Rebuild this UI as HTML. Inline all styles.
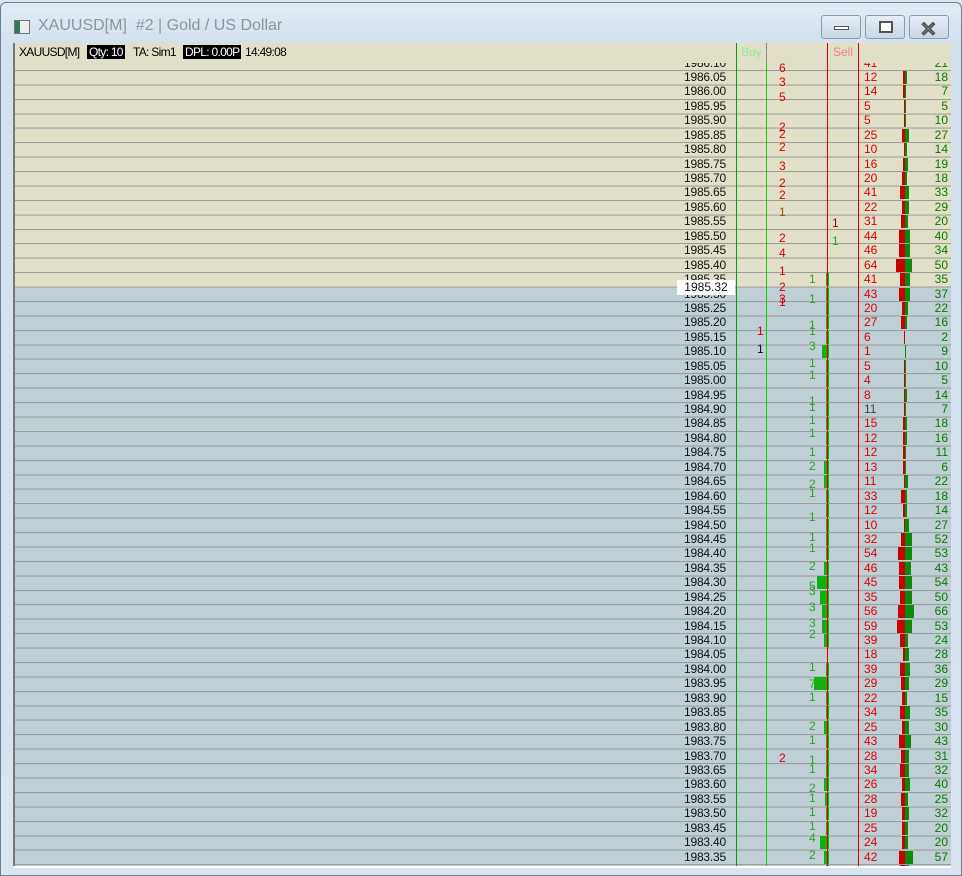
<!DOCTYPE html>
<html><head><meta charset="utf-8"><style>
*{margin:0;padding:0;box-sizing:border-box}
body{width:962px;height:876px;overflow:hidden;background:#d9e5f1;font-family:"Liberation Sans",sans-serif;font-size:12px;position:relative}
#frame{position:absolute;left:0;top:2px;width:962px;height:874px;background:linear-gradient(#e4ecf5,#d3e0ee 40px,#d8e4f0);border:1px solid #6d7f93;border-radius:6px 6px 0 0}
#title{position:absolute;left:38px;top:17px;font-size:16px;color:#8c969f}
#ico{position:absolute;left:14px;top:20px;width:16px;height:14px;border:1px solid #777;background:linear-gradient(90deg,#2b7a5a 0 5px,#eee 5px)}
.btn{position:absolute;top:15px;width:40px;height:24px;border:1px solid #8a9bb0;border-radius:3px;background:linear-gradient(#e8eef6,#c9d6e6)}
#area{position:absolute;left:13px;top:43px;width:938px;height:823px;overflow:hidden;background:#bfcfd6;border-left:2px solid #777}
#tan{position:absolute;left:0;top:0;width:100%;height:244px;background:#e2dfc8}
#lines{position:absolute;left:0;top:0;width:100%;height:100%;background:repeating-linear-gradient(to bottom,transparent 0,transparent 13.44px,#999 13.44px,#999 14.44px);background-position:0 13.56px}
#rows{position:absolute;left:0;top:12.56px;width:938px}
.r{position:relative;height:14.44px}
.r span{position:absolute;top:0;line-height:14px}
.p{left:0;width:711px;text-align:right;color:#111;letter-spacing:-0.2px}
.a{left:849px;color:#d00}
.g{left:880px;width:53px;text-align:right;color:#0a7a00}
.br{position:absolute;top:1px;height:13px;right:48px;background:#c80000}
.bg{position:absolute;top:1px;height:13px;left:890px;background:#0a8a0a}
.gb{position:absolute;top:1px;height:13px;right:124px;background:#10b010}
.v{position:absolute;top:0;width:1px;height:100%}
.n{position:absolute;line-height:14px}
.nr{color:#d00}.ng{color:#2aa52a}
#hdr{position:absolute;left:0;top:0;width:100%;height:20px;background:#e2dfc8}
#hdr span{position:absolute;top:2px;letter-spacing:-0.7px;white-space:nowrap}
.bk{background:#000;color:#fff;padding:0 2px}
</style></head><body>
<div id="frame"></div>
<div id="ico"></div>
<div id="title">XAUUSD[M]&nbsp; #2 | Gold / US Dollar</div>
<div class="btn" style="left:821px"><div style="position:absolute;left:12px;top:10px;width:15px;height:4px;background:#fff;border:1px solid #555"></div></div>
<div class="btn" style="left:865px"><div style="position:absolute;left:13px;top:5px;width:14px;height:12px;background:#fff;border:2px solid #555"></div></div>
<div class="btn" style="left:909px"><div style="position:absolute;left:10px;top:1px;font-size:20px;font-weight:bold;color:#fff;-webkit-text-stroke:1px #555">✕</div></div>
<div id="area">
<div id="tan"></div>
<div id="lines"></div>
<div id="rows">
<div class="r"><span class="p">1986.10</span><span class="a">41</span><span class="g">21</span></div>
<div class="r"><span class="p">1986.05</span><span class="a">12</span><span class="g">18</span><i class="br" style="width:2px"></i><i class="bg" style="width:2px"></i></div>
<div class="r"><span class="p">1986.00</span><span class="a">14</span><span class="g">7</span><i class="br" style="width:2px"></i><i class="bg" style="width:1px"></i></div>
<div class="r"><span class="p">1985.95</span><span class="a">5</span><span class="g">5</span><i class="br" style="width:1px"></i><i class="bg" style="width:1px"></i></div>
<div class="r"><span class="p">1985.90</span><span class="a">5</span><span class="g">10</span><i class="br" style="width:1px"></i><i class="bg" style="width:1px"></i></div>
<div class="r"><span class="p">1985.85</span><span class="a">25</span><span class="g">27</span><i class="br" style="width:3px"></i><i class="bg" style="width:4px"></i></div>
<div class="r"><span class="p">1985.80</span><span class="a">10</span><span class="g">14</span><i class="br" style="width:1px"></i><i class="bg" style="width:2px"></i></div>
<div class="r"><span class="p">1985.75</span><span class="a">16</span><span class="g">19</span><i class="br" style="width:2px"></i><i class="bg" style="width:3px"></i></div>
<div class="r"><span class="p">1985.70</span><span class="a">20</span><span class="g">18</span><i class="br" style="width:3px"></i><i class="bg" style="width:2px"></i></div>
<div class="r"><span class="p">1985.65</span><span class="a">41</span><span class="g">33</span><i class="br" style="width:5px"></i><i class="bg" style="width:4px"></i></div>
<div class="r"><span class="p">1985.60</span><span class="a">22</span><span class="g">29</span><i class="br" style="width:3px"></i><i class="bg" style="width:4px"></i></div>
<div class="r"><span class="p">1985.55</span><span class="a">31</span><span class="g">20</span><i class="br" style="width:4px"></i><i class="bg" style="width:3px"></i></div>
<div class="r"><span class="p">1985.50</span><span class="a">44</span><span class="g">40</span><i class="br" style="width:6px"></i><i class="bg" style="width:5px"></i></div>
<div class="r"><span class="p">1985.45</span><span class="a">46</span><span class="g">34</span><i class="br" style="width:6px"></i><i class="bg" style="width:5px"></i></div>
<div class="r"><span class="p">1985.40</span><span class="a">64</span><span class="g">50</span><i class="br" style="width:9px"></i><i class="bg" style="width:7px"></i></div>
<div class="r"><span class="p">1985.35</span><span class="a">41</span><span class="g">35</span><i class="br" style="width:5px"></i><i class="bg" style="width:5px"></i><i class="gb" style="width:3px"></i></div>
<div class="r"><span class="p">1985.30</span><span class="a">43</span><span class="g">37</span><i class="br" style="width:6px"></i><i class="bg" style="width:5px"></i><i class="gb" style="width:3px"></i></div>
<div class="r"><span class="p">1985.25</span><span class="a">20</span><span class="g">22</span><i class="br" style="width:3px"></i><i class="bg" style="width:3px"></i><i class="gb" style="width:3px"></i></div>
<div class="r"><span class="p">1985.20</span><span class="a">27</span><span class="g">16</span><i class="br" style="width:4px"></i><i class="bg" style="width:2px"></i><i class="gb" style="width:3px"></i></div>
<div class="r"><span class="p">1985.15</span><span class="a">6</span><span class="g">2</span><i class="br" style="width:1px"></i><i class="gb" style="width:3px"></i></div>
<div class="r"><span class="p">1985.10</span><span class="a">1</span><span class="g">9</span><i class="bg" style="width:1px"></i><i class="gb" style="width:7px"></i></div>
<div class="r"><span class="p">1985.05</span><span class="a">5</span><span class="g">10</span><i class="br" style="width:1px"></i><i class="bg" style="width:1px"></i><i class="gb" style="width:3px"></i></div>
<div class="r"><span class="p">1985.00</span><span class="a">4</span><span class="g">5</span><i class="br" style="width:1px"></i><i class="bg" style="width:1px"></i><i class="gb" style="width:3px"></i></div>
<div class="r"><span class="p">1984.95</span><span class="a">8</span><span class="g">14</span><i class="br" style="width:1px"></i><i class="bg" style="width:2px"></i><i class="gb" style="width:3px"></i></div>
<div class="r"><span class="p">1984.90</span><span class="a" style="color:#444">11</span><span class="g">7</span><i class="br" style="width:1px"></i><i class="bg" style="width:1px"></i><i class="gb" style="width:3px"></i></div>
<div class="r"><span class="p">1984.85</span><span class="a">15</span><span class="g">18</span><i class="br" style="width:2px"></i><i class="bg" style="width:2px"></i><i class="gb" style="width:3px"></i></div>
<div class="r"><span class="p">1984.80</span><span class="a">12</span><span class="g">16</span><i class="br" style="width:2px"></i><i class="bg" style="width:2px"></i><i class="gb" style="width:3px"></i></div>
<div class="r"><span class="p">1984.75</span><span class="a">12</span><span class="g">11</span><i class="br" style="width:2px"></i><i class="bg" style="width:1px"></i><i class="gb" style="width:3px"></i></div>
<div class="r"><span class="p">1984.70</span><span class="a">13</span><span class="g">6</span><i class="br" style="width:2px"></i><i class="bg" style="width:1px"></i><i class="gb" style="width:5px"></i></div>
<div class="r"><span class="p">1984.65</span><span class="a">11</span><span class="g">22</span><i class="br" style="width:1px"></i><i class="bg" style="width:3px"></i><i class="gb" style="width:5px"></i></div>
<div class="r"><span class="p">1984.60</span><span class="a">33</span><span class="g">18</span><i class="br" style="width:4px"></i><i class="bg" style="width:2px"></i><i class="gb" style="width:3px"></i></div>
<div class="r"><span class="p">1984.55</span><span class="a">12</span><span class="g">14</span><i class="br" style="width:2px"></i><i class="bg" style="width:2px"></i><i class="gb" style="width:3px"></i></div>
<div class="r"><span class="p">1984.50</span><span class="a">10</span><span class="g">27</span><i class="br" style="width:1px"></i><i class="bg" style="width:4px"></i><i class="gb" style="width:3px"></i></div>
<div class="r"><span class="p">1984.45</span><span class="a">32</span><span class="g">52</span><i class="br" style="width:4px"></i><i class="bg" style="width:7px"></i><i class="gb" style="width:3px"></i></div>
<div class="r"><span class="p">1984.40</span><span class="a">54</span><span class="g">53</span><i class="br" style="width:7px"></i><i class="bg" style="width:7px"></i><i class="gb" style="width:3px"></i></div>
<div class="r"><span class="p">1984.35</span><span class="a">46</span><span class="g">43</span><i class="br" style="width:6px"></i><i class="bg" style="width:6px"></i><i class="gb" style="width:5px"></i></div>
<div class="r"><span class="p">1984.30</span><span class="a">45</span><span class="g">54</span><i class="br" style="width:6px"></i><i class="bg" style="width:7px"></i><i class="gb" style="width:12px"></i></div>
<div class="r"><span class="p">1984.25</span><span class="a">35</span><span class="g">50</span><i class="br" style="width:5px"></i><i class="bg" style="width:7px"></i><i class="gb" style="width:9px"></i></div>
<div class="r"><span class="p">1984.20</span><span class="a">56</span><span class="g">66</span><i class="br" style="width:7px"></i><i class="bg" style="width:9px"></i><i class="gb" style="width:7px"></i></div>
<div class="r"><span class="p">1984.15</span><span class="a">59</span><span class="g">53</span><i class="br" style="width:8px"></i><i class="bg" style="width:7px"></i><i class="gb" style="width:7px"></i></div>
<div class="r"><span class="p">1984.10</span><span class="a">39</span><span class="g">24</span><i class="br" style="width:5px"></i><i class="bg" style="width:3px"></i><i class="gb" style="width:5px"></i></div>
<div class="r"><span class="p">1984.05</span><span class="a">18</span><span class="g">28</span><i class="br" style="width:2px"></i><i class="bg" style="width:4px"></i></div>
<div class="r"><span class="p">1984.00</span><span class="a">39</span><span class="g">36</span><i class="br" style="width:5px"></i><i class="bg" style="width:5px"></i><i class="gb" style="width:3px"></i></div>
<div class="r"><span class="p">1983.95</span><span class="a">29</span><span class="g">29</span><i class="br" style="width:4px"></i><i class="bg" style="width:4px"></i><i class="gb" style="width:15px"></i></div>
<div class="r"><span class="p">1983.90</span><span class="a">22</span><span class="g">15</span><i class="br" style="width:3px"></i><i class="bg" style="width:2px"></i><i class="gb" style="width:3px"></i></div>
<div class="r"><span class="p">1983.85</span><span class="a">34</span><span class="g">35</span><i class="br" style="width:5px"></i><i class="bg" style="width:5px"></i><i class="gb" style="width:3px"></i></div>
<div class="r"><span class="p">1983.80</span><span class="a">25</span><span class="g">30</span><i class="br" style="width:3px"></i><i class="bg" style="width:4px"></i><i class="gb" style="width:5px"></i></div>
<div class="r"><span class="p">1983.75</span><span class="a">43</span><span class="g">43</span><i class="br" style="width:6px"></i><i class="bg" style="width:6px"></i><i class="gb" style="width:3px"></i></div>
<div class="r"><span class="p">1983.70</span><span class="a">28</span><span class="g">31</span><i class="br" style="width:4px"></i><i class="bg" style="width:4px"></i><i class="gb" style="width:3px"></i></div>
<div class="r"><span class="p">1983.65</span><span class="a">34</span><span class="g">32</span><i class="br" style="width:5px"></i><i class="bg" style="width:4px"></i><i class="gb" style="width:3px"></i></div>
<div class="r"><span class="p">1983.60</span><span class="a">26</span><span class="g">40</span><i class="br" style="width:3px"></i><i class="bg" style="width:5px"></i><i class="gb" style="width:5px"></i></div>
<div class="r"><span class="p">1983.55</span><span class="a">28</span><span class="g">25</span><i class="br" style="width:4px"></i><i class="bg" style="width:3px"></i><i class="gb" style="width:4px"></i></div>
<div class="r"><span class="p">1983.50</span><span class="a">19</span><span class="g">32</span><i class="br" style="width:3px"></i><i class="bg" style="width:4px"></i><i class="gb" style="width:3px"></i></div>
<div class="r"><span class="p">1983.45</span><span class="a">25</span><span class="g">20</span><i class="br" style="width:3px"></i><i class="bg" style="width:3px"></i><i class="gb" style="width:3px"></i></div>
<div class="r"><span class="p">1983.40</span><span class="a">24</span><span class="g">20</span><i class="br" style="width:3px"></i><i class="bg" style="width:3px"></i><i class="gb" style="width:9px"></i></div>
<div class="r"><span class="p">1983.35</span><span class="a">42</span><span class="g">57</span><i class="br" style="width:6px"></i><i class="bg" style="width:8px"></i><i class="gb" style="width:5px"></i></div>
<div class="r"><span class="p">1983.30</span><span class="a">41</span><span class="g">33</span><i class="br" style="width:5px"></i><i class="bg" style="width:4px"></i><i class="gb" style="width:3px"></i></div>
</div>
<div class="v" style="left:721px;background:#0a9a0a"></div>
<div class="v" style="left:751px;background:#14c814"></div>
<div class="v" style="left:812px;background:#d00"></div>
<div class="v" style="left:843px;background:#d00"></div>
<span class="n nr" style="left:764px;top:18px">6</span>
<span class="n nr" style="left:764px;top:32px">3</span>
<span class="n nr" style="left:764px;top:47px">5</span>
<span class="n nr" style="left:764px;top:77px">2</span>
<span class="n nr" style="left:764px;top:84px">2</span>
<span class="n nr" style="left:764px;top:97px">2</span>
<span class="n nr" style="left:764px;top:116px">3</span>
<span class="n nr" style="left:764px;top:133px">2</span>
<span class="n nr" style="left:764px;top:145px">2</span>
<span class="n nr" style="left:764px;top:162px;color:#8a5a00">1</span>
<span class="n nr" style="left:764px;top:188px">2</span>
<span class="n nr" style="left:764px;top:203px">4</span>
<span class="n nr" style="left:764px;top:221px">1</span>
<span class="n nr" style="left:764px;top:237px">2</span>
<span class="n nr" style="left:764px;top:249px">3</span>
<span class="n nr" style="left:764px;top:252px">1</span>
<span class="n nr" style="left:764px;top:708px">2</span>
<span class="n nr" style="left:742px;top:281px">1</span>
<span class="n" style="left:742px;top:299px;color:#111">1</span>
<span class="n nr" style="left:817px;top:173px;color:#900">1</span>
<span class="n ng" style="left:817px;top:191px">1</span>
<span class="n ng" style="left:794px;top:229px">1</span>
<span class="n ng" style="left:794px;top:249px">1</span>
<span class="n ng" style="left:794px;top:275px">1</span>
<span class="n ng" style="left:794px;top:281px">1</span>
<span class="n ng" style="left:794px;top:296px">3</span>
<span class="n ng" style="left:794px;top:313px">1</span>
<span class="n ng" style="left:794px;top:325px">1</span>
<span class="n ng" style="left:794px;top:351px">1</span>
<span class="n ng" style="left:794px;top:357px">1</span>
<span class="n ng" style="left:794px;top:370px">1</span>
<span class="n ng" style="left:794px;top:383px">1</span>
<span class="n ng" style="left:794px;top:402px">1</span>
<span class="n ng" style="left:794px;top:416px">2</span>
<span class="n ng" style="left:794px;top:434px">2</span>
<span class="n ng" style="left:794px;top:443px">1</span>
<span class="n ng" style="left:794px;top:467px">1</span>
<span class="n ng" style="left:794px;top:487px">1</span>
<span class="n ng" style="left:794px;top:498px">1</span>
<span class="n ng" style="left:794px;top:516px">2</span>
<span class="n ng" style="left:794px;top:536px">5</span>
<span class="n ng" style="left:794px;top:541px">3</span>
<span class="n ng" style="left:794px;top:557px">3</span>
<span class="n ng" style="left:794px;top:573px">3</span>
<span class="n ng" style="left:794px;top:584px">2</span>
<span class="n ng" style="left:794px;top:617px">1</span>
<span class="n ng" style="left:794px;top:634px">7</span>
<span class="n ng" style="left:794px;top:647px">1</span>
<span class="n ng" style="left:794px;top:676px">2</span>
<span class="n ng" style="left:794px;top:690px">1</span>
<span class="n ng" style="left:794px;top:710px">1</span>
<span class="n ng" style="left:794px;top:719px">1</span>
<span class="n ng" style="left:794px;top:738px">2</span>
<span class="n ng" style="left:794px;top:748px">1</span>
<span class="n ng" style="left:794px;top:762px">1</span>
<span class="n ng" style="left:794px;top:776px">1</span>
<span class="n ng" style="left:794px;top:788px">4</span>
<span class="n ng" style="left:794px;top:805px">2</span>
<div style="position:absolute;left:662px;top:237px;width:58px;height:15px;background:#fff;text-align:center;line-height:15px;color:#111">1985.32</div>
<div id="hdr">
<span style="left:4px">XAUUSD[M]</span>
<span class="bk" style="left:72px">Qty: 10</span>
<span style="left:118px">TA: Sim1</span>
<span class="bk" style="left:168px">DPL: 0.00P</span>
<span style="left:230px">14:49:08</span>
<span style="left:726px;color:#8ef08e;letter-spacing:0">Buy</span>
<span style="left:818px;color:#f08080;letter-spacing:0">Sell</span>
<div class="v" style="left:721px;background:#0a9a0a"></div>
<div class="v" style="left:751px;background:#888"></div>
<div class="v" style="left:812px;background:#d00"></div>
<div class="v" style="left:843px;background:#d00"></div>
</div>
</div>
<div style="position:absolute;left:13px;top:866px;width:938px;height:2px;background:#fff"></div>
</body></html>
